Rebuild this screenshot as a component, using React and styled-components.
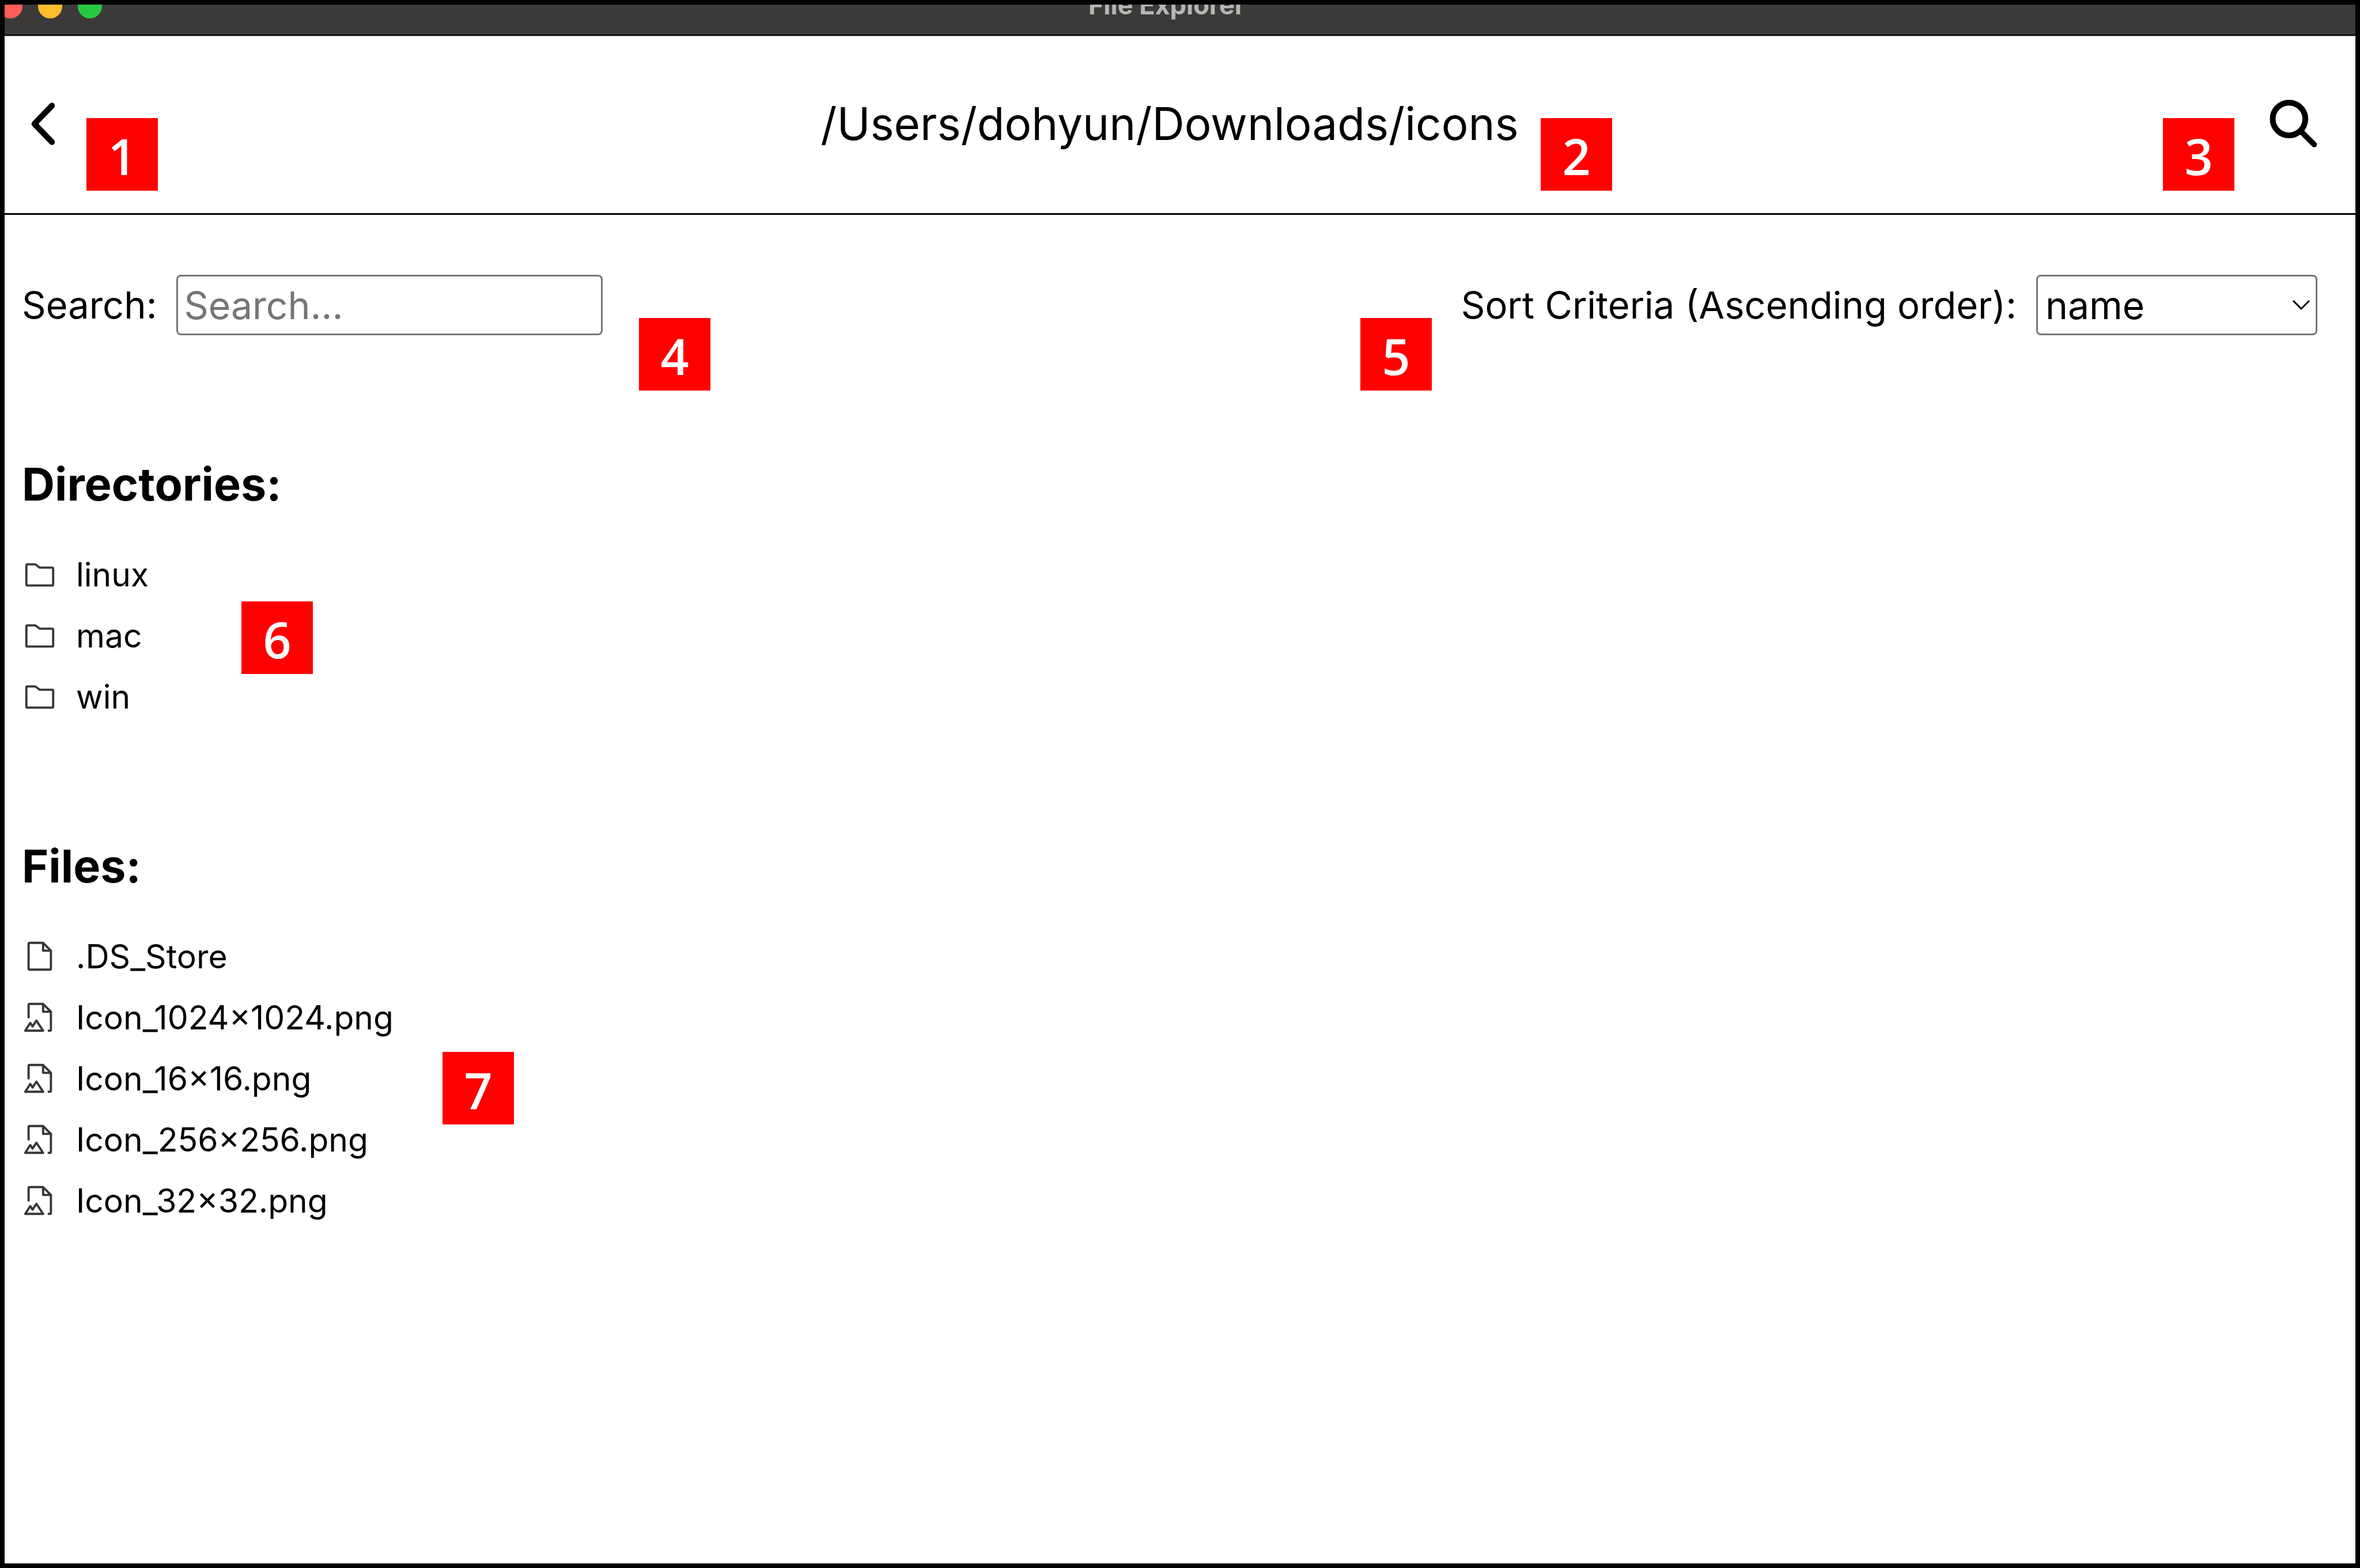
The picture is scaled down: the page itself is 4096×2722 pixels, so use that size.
import React, { useState } from "react";
import styled, { createGlobalStyle } from "styled-components";
import { PiFile, PiFileImage, PiFolderSimple } from "react-icons/pi";

const GlobalStyle = createGlobalStyle`
  *, *::before, *::after { box-sizing: border-box; }
  body {
    margin: 0;
    background: #fff;
    color: #000;
    font-family: Inter, "Liberation Sans", sans-serif;
  }
`;

const Frame = styled.div`
  position: relative;
  display: flex;
  flex-direction: column;
  min-height: 100vh;
  border: 8px solid #000;
  background: #fff;
`;

/* The window is cut a little below its top edge, so the bar shows its lower part only. */
const TitleBar = styled.div`
  display: flex;
  align-items: flex-end;
  height: 54px;
  overflow: hidden;
  background: #3b3a38;
  border-bottom: 2px solid #000;
`;

const TitleBarInner = styled.div`
  flex: 1;
  display: grid;
  grid-template-columns: 1fr auto 1fr;
  align-items: center;
  height: 98px;
  padding-right: 46px;
`;

const Lights = styled.div`
  display: flex;
  gap: 27px;
  margin-left: -11px;
`;

const Light = styled.span`
  width: 42px;
  height: 42px;
  border-radius: 50%;
  background: ${(p) => p.$color};
`;

const WindowTitle = styled.span`
  padding-bottom: 4px;
  color: #b6b6b5;
  font-size: 45px;
  font-weight: 700;
  line-height: 56px;
`;

const Header = styled.header`
  display: grid;
  grid-template-columns: 1fr auto 1fr;
  align-items: center;
  height: 311px;
  padding: 0 66px 4px 30px;
  border-top: 1px solid #999;
  border-bottom: 3px solid #000;
`;

const IconButton = styled.button`
  display: flex;
  justify-self: ${(p) => p.$side};
  padding: 0;
  margin-left: ${(p) => (p.$side === "start" ? "16px" : 0)};
  border: 0;
  background: none;
  color: #000;
  cursor: pointer;
`;

const PathTitle = styled.h1`
  margin: 0;
  font-size: 78px;
  font-weight: 400;
  line-height: 96px;
`;

const Content = styled.main`
  padding: 104px 66px 104px 30px;
`;

const Controls = styled.div`
  display: flex;
  justify-content: space-between;
  padding-bottom: 17px;
`;

const Field = styled.div`
  display: flex;
  align-items: center;
  gap: 34px;
`;

const FieldLabel = styled.label`
  font-size: 65px;
  line-height: 80px;
`;

const SearchInput = styled.input`
  width: 740px;
  height: 105px;
  padding: 0 10px;
  border: 3px solid #767676;
  border-radius: 8px;
  background: #fff;
  color: #000;
  font-family: inherit;
  font-size: 66px;
  &::placeholder { color: #757575; opacity: 1; }
`;

const SelectBox = styled.div`
  position: relative;
`;

const SortSelect = styled.select`
  display: block;
  appearance: none;
  width: 488px;
  height: 105px;
  padding: 0 13px;
  border: 3px solid #767676;
  border-radius: 8px;
  background: #fff;
  color: #000;
  font-family: inherit;
  font-size: 66px;
`;

const SelectArrow = styled.svg`
  position: absolute;
  right: 13px;
  top: 44px;
  width: 30px;
  height: 18px;
  pointer-events: none;
`;

const Section = styled.section`
  margin-top: 195px;
`;

const SectionTitle = styled.h2`
  margin: 0 0 58px;
  font-size: 79px;
  font-weight: 700;
  line-height: 92px;
`;

const EntryList = styled.ul`
  margin: 0;
  padding: 0;
  list-style: none;
`;

const Entry = styled.li`
  display: flex;
  align-items: center;
  gap: 32px;
  height: 106px;
  font-size: 57px;
  svg {
    width: 62px;
    height: 62px;
    color: #383733;
  }
`;

const Marker = styled.span`
  position: absolute;
  top: ${(p) => p.$top}px;
  left: ${(p) => p.$left ?? "auto"};
  right: ${(p) => p.$right ?? "auto"};
  display: flex;
  align-items: center;
  justify-content: center;
  width: 124px;
  height: 126px;
  padding-top: 4px;
  background: #f00;
  color: #fff;
  font-family: "Open Sans", sans-serif;
  font-size: 86px;
  font-weight: 600;
`;

const lights = ["#ff5f58", "#febc2f", "#28c941"];

const directories = ["linux", "mac", "win"];

const files = [
  { name: ".DS_Store", Icon: PiFile },
  { name: "Icon_1024×1024.png", Icon: PiFileImage },
  { name: "Icon_16×16.png", Icon: PiFileImage },
  { name: "Icon_256×256.png", Icon: PiFileImage },
  { name: "Icon_32×32.png", Icon: PiFileImage },
];

const markers = [
  { top: 197, left: "142px" },
  { top: 197, left: "calc(50% + 626px)" },
  { top: 197, right: "210px" },
  { top: 544, left: "1101px" },
  { top: 544, right: "1603px" },
  { top: 1036, left: "411px" },
  { top: 1818, left: "760px" },
];

function BackIcon() {
  return (
    <svg width="41" height="74" viewBox="0 0 50 90" fill="none" stroke="currentColor" strokeWidth="12.5" strokeLinecap="round" strokeLinejoin="round">
      <path d="M44 6.5 7 45 44 83.5" />
    </svg>
  );
}

function SearchIcon() {
  return (
    <svg width="83" height="83" viewBox="0 0 101 102" fill="none" stroke="currentColor">
      <circle cx="41" cy="41.3" r="34.8" strokeWidth="12.3" />
      <path d="M67 68 94.7 95.7" strokeWidth="12" strokeLinecap="round" />
    </svg>
  );
}

export default function App() {
  const [query, setQuery] = useState("");
  const [sort, setSort] = useState("name");
  const matches = (name) => name.toLowerCase().includes(query.toLowerCase());

  return (
    <>
      <GlobalStyle />
      <Frame>
        <TitleBar>
          <TitleBarInner>
            <Lights>
              {lights.map((color) => (
                <Light key={color} $color={color} />
              ))}
            </Lights>
            <WindowTitle>File Explorer</WindowTitle>
          </TitleBarInner>
        </TitleBar>

        <Header>
          <IconButton type="button" aria-label="Back" $side="start">
            <BackIcon />
          </IconButton>
          <PathTitle>/Users/dohyun/Downloads/icons</PathTitle>
          <IconButton type="button" aria-label="Search" $side="end">
            <SearchIcon />
          </IconButton>
        </Header>

        <Content>
          <Controls>
            <Field>
              <FieldLabel htmlFor="search">Search:</FieldLabel>
              <SearchInput
                id="search"
                type="text"
                placeholder="Search..."
                value={query}
                onChange={(e) => setQuery(e.target.value)}
              />
            </Field>
            <Field>
              <FieldLabel htmlFor="sort">Sort Criteria (Ascending order):</FieldLabel>
              <SelectBox>
                <SortSelect id="sort" value={sort} onChange={(e) => setSort(e.target.value)}>
                  <option value="name">name</option>
                  <option value="size">size</option>
                  <option value="date">date</option>
                </SortSelect>
                <SelectArrow viewBox="0 0 30 18" fill="none" stroke="#000" strokeWidth="3">
                  <path d="M1 1 15 15 29 1" />
                </SelectArrow>
              </SelectBox>
            </Field>
          </Controls>

          <Section>
            <SectionTitle>Directories:</SectionTitle>
            <EntryList>
              {directories.filter(matches).map((name) => (
                <Entry key={name}>
                  <PiFolderSimple />
                  {name}
                </Entry>
              ))}
            </EntryList>
          </Section>

          <Section>
            <SectionTitle>Files:</SectionTitle>
            <EntryList>
              {files.filter((f) => matches(f.name)).map(({ name, Icon }) => (
                <Entry key={name}>
                  <Icon />
                  {name}
                </Entry>
              ))}
            </EntryList>
          </Section>
        </Content>

        {markers.map((m, i) => (
          <Marker key={i} $top={m.top} $left={m.left} $right={m.right}>
            {i + 1}
          </Marker>
        ))}
      </Frame>
    </>
  );
}
